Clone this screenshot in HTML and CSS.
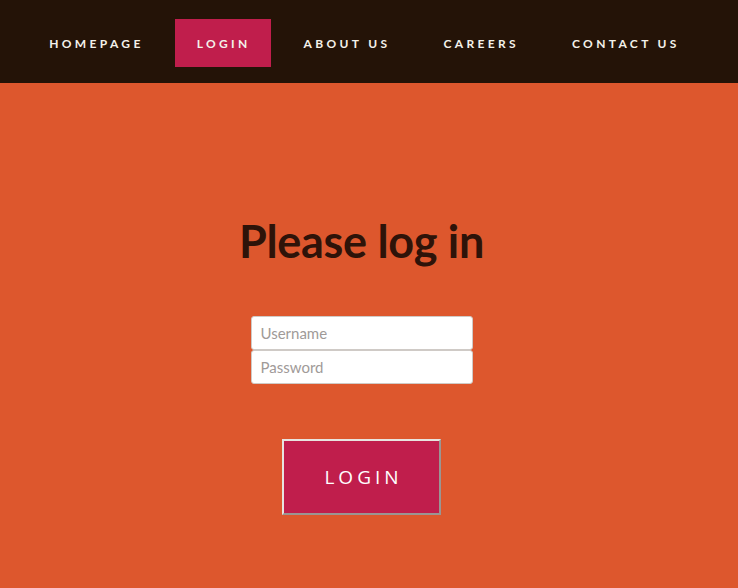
FILE: index.html
```html
<!DOCTYPE html>
<html>
<head>
<meta charset="utf-8">
<link rel="stylesheet" href="styles.css">
</head>
<body>
<nav class="nav">
  <a class="nav-item">HOMEPAGE</a>
  <a class="nav-item active">LOGIN</a>
  <a class="nav-item">ABOUT US</a>
  <a class="nav-item">CAREERS</a>
  <a class="nav-item">CONTACT US</a>
</nav>
<main class="main">
  <h1 class="title">Please log in</h1>
  <form class="form">
    <input class="field" type="text" placeholder="Username">
    <input class="field" type="password" placeholder="Password">
    <button class="btn" type="button">LOGIN</button>
  </form>
</main>
</body>
</html>
```

FILE: styles.css
```css
html, body {
  margin: 0;
  padding: 0;
  height: 100%;
}
body {
  background: #dd572d;
  font-family: "Lato", "Open Sans", sans-serif;
}
.nav {
  box-sizing: border-box;
  background: #241307;
  height: 83px;
  display: flex;
  justify-content: center;
  align-items: center;
  gap: 11px;
  padding: 3px 11px 0 0;
}
.nav-item {
  display: flex;
  align-items: center;
  height: 48px;
  padding: 0 20px 0 22px;
  color: #f4f1ea;
  font-weight: 700;
  font-size: 12px;
  letter-spacing: 3.35px;
}
.nav-item.active {
  background: #c01e4c;
}
.main {
  display: flex;
  flex-direction: column;
  align-items: center;
  padding-right: 15px;
}
.title {
  margin: 131px 0 0;
  font-size: 45px;
  line-height: 54px;
  font-weight: 700;
  color: #2e1309;
  letter-spacing: -0.3px;
}
.form {
  display: flex;
  flex-direction: column;
  align-items: center;
  margin-top: 48px;
}
.field {
  box-sizing: border-box;
  width: 222px;
  height: 34px;
  margin: 0;
  padding: 0 9px;
  border: 1px solid #cfcac6;
  border-radius: 3px;
  background: #fff;
  font-family: "Lato", sans-serif;
  font-size: 15px;
  color: #333;
}
.field::placeholder {
  color: #a09a98;
}
.btn {
  box-sizing: border-box;
  margin-top: 55px;
  width: 159px;
  height: 76px;
  background: #c01e4c;
  border: 2px solid;
  border-color: #e8e4df #9b9592 #9b9592 #e8e4df;
  color: #fff;
  font-family: "Open Sans", sans-serif;
  font-size: 19px;
  letter-spacing: 4px;
  padding: 0 0 0 4px;
}
```
